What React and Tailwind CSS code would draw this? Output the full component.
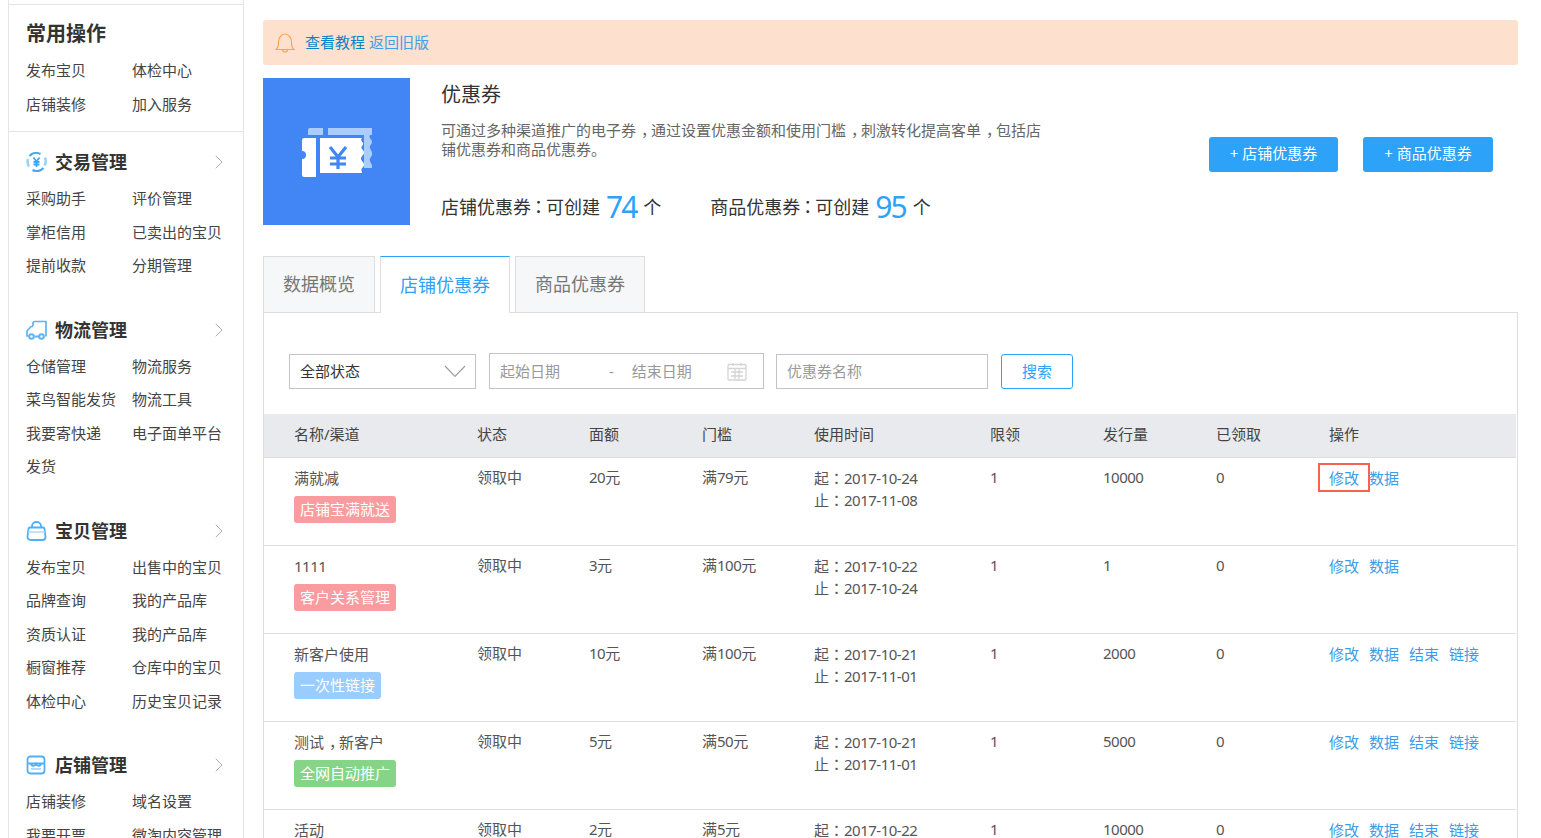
import { ChevronRight } from "lucide-react";

const SIDE = [
  {
    title: "交易管理",
    icon: "money",
    items: ["采购助手", "评价管理", "掌柜信用", "已卖出的宝贝", "提前收款", "分期管理"],
  },
  {
    title: "物流管理",
    icon: "truck",
    items: ["仓储管理", "物流服务", "菜鸟智能发货", "物流工具", "我要寄快递", "电子面单平台", "发货"],
  },
  {
    title: "宝贝管理",
    icon: "bag",
    items: ["发布宝贝", "出售中的宝贝", "品牌查询", "我的产品库", "资质认证", "我的产品库", "橱窗推荐", "仓库中的宝贝", "体检中心", "历史宝贝记录"],
  },
  {
    title: "店铺管理",
    icon: "shop",
    items: ["店铺装修", "域名设置", "我要开票", "微淘内容管理"],
  },
];

const ROWS = [
  { name: "满就减", tag: "店铺宝满就送", tagClass: "bg-[#f99b9f]", value: "20", min: "79", from: "2017-10-24", to: "2017-11-08", total: "10000", actions: ["修改", "数据"], boxed: true },
  { name: "1111", tag: "客户关系管理", tagClass: "bg-[#f99b9f]", value: "3", min: "100", from: "2017-10-22", to: "2017-10-24", total: "1", actions: ["修改", "数据"] },
  { name: "新客户使用", tag: "一次性链接", tagClass: "bg-[#99ccff]", value: "10", min: "100", from: "2017-10-21", to: "2017-11-01", total: "2000", actions: ["修改", "数据", "结束", "链接"] },
  { name: "测试，新客户", tag: "全网自动推广", tagClass: "bg-[#86d488]", value: "5", min: "50", from: "2017-10-21", to: "2017-11-01", total: "5000", actions: ["修改", "数据", "结束", "链接"] },
  { name: "活动", tag: "全网自动推广", tagClass: "bg-[#86d488]", value: "2", min: "5", from: "2017-10-22", to: "2017-11-01", total: "10000", actions: ["修改", "数据", "结束", "链接"] },
];

const GRID = "grid grid-cols-[183px_112px_113px_112px_176px_113px_113px_113px_1fr] pl-[30px]";

// the reference centres full-width punctuation in its box: the TC colon does that,
// the comma stays on the baseline so it just gets nudged right
function Txt({ children }) {
  return children.split(/([，：])/).map((part, i) => {
    if (part === "：") {
      return <span key={i} className="font-['Noto_Sans_CJK_TC',sans-serif] leading-none">{part}</span>;
    }
    if (part === "，") {
      return <span key={i} className="inline-block translate-x-[5px] leading-none">{part}</span>;
    }
    return part;
  });
}

function Num({ children }) {
  return <span className="tracking-[-0.5px]">{children}</span>;
}

function SideIcon({ type }) {
  if (type === "money") {
    return (
      <svg width="21" height="20" viewBox="0 0 21 20" fill="none" stroke="#3ea6f5">
        <path d="M3.500 4A9 9 0 0 1 14.500 2" strokeWidth="2" />
        <path d="M17.500 16A9 9 0 0 1 6.500 18" strokeWidth="2" />
        <path d="M2 7A9 9 0 0 0 3 14.500" strokeWidth="2.600" stroke="#9dd3fa" />
        <path d="M19 5.500A9 9 0 0 1 18.500 13.500" strokeWidth="2.600" stroke="#9dd3fa" />
        <path d="M7.500 5.500 10.500 9.500 13.500 5.500M10.500 9.500V15M7.500 10h6M7.500 12.500h6" strokeWidth="1.800" />
      </svg>
    );
  }
  if (type === "truck") {
    return (
      <svg width="21" height="20" viewBox="0 0 21 20" fill="none" stroke="#5cb3f5" strokeWidth="1.700">
        <path d="M7 6V3.500a2 2 0 0 1 2-2h11v13.500a1 1 0 0 1-1 1" />
        <path d="M7 6.500H5L1 11v5h1.500" />
        <path d="M8.500 16.500h4.500" strokeWidth="2" />
        <circle cx="5.500" cy="16.500" r="2.300" strokeWidth="2" />
        <circle cx="15.500" cy="16.500" r="2.300" strokeWidth="2" />
      </svg>
    );
  }
  if (type === "bag") {
    return (
      <svg width="21" height="20" viewBox="0 0 21 20" fill="none" stroke="#4fb0f7" strokeWidth="1.800">
        <path d="M2.500 7.500a2 2 0 0 1 2-1h12a2 2 0 0 1 2 1l1 8.500a3 3 0 0 1-3 3H4.500a3 3 0 0 1-3-3z" />
        <path d="M6 6.500V5a4.500 4 0 0 1 9 0v1.500" />
        <path d="M2 11h17" stroke="#a7d8fb" strokeWidth="1.400" />
      </svg>
    );
  }
  return (
    <svg width="20" height="20" viewBox="0 0 20 20" fill="none" stroke="#4fb0f7" strokeWidth="1.800">
      <rect x="1.500" y="1.500" width="17" height="17" rx="3" />
      <path d="M1 8.500h18M5 8.500c0 3 4 3 5 .5 1 2.500 5 2.500 5-.5" />
      <path d="M5 14h10" stroke="#a7d8fb" />
    </svg>
  );
}

function Sidebar() {
  return (
    <aside className="ml-2 w-[236px] shrink-0 self-start border-x border-[#e4e4e4] pt-1 text-[15px] text-[#444]">
      <div className="border-y border-[#e4e4e4] pl-[17px] pt-[16px] pb-[10px]">
        <h2 className="text-[20px] leading-[26px] font-bold text-[#333]">常用操作</h2>
        <div className="mt-[7px] grid grid-cols-[106px_1fr]">
          {["发布宝贝", "体检中心", "店铺装修", "加入服务"].map((t) => (
            <span key={t} className="h-[33.500px] leading-[33.500px]">{t}</span>
          ))}
        </div>
      </div>
      {SIDE.map((s) => (
        <section key={s.title} className="pl-[17px] pt-[18px] pb-[17px]">
          <div className="flex h-[24px] items-center">
            <span className="flex w-[29px] items-center"><SideIcon type={s.icon} /></span>
            <h3 className="text-[18px] leading-[24px] font-bold text-[#333]">{s.title}</h3>
            <ChevronRight className="ml-auto mr-[12px] text-[#999]" size={24} strokeWidth={0.8} />
          </div>
          <div className="mt-[8px] grid grid-cols-[106px_1fr]">
            {s.items.map((t, i) => (
              <span key={i} className="h-[33.500px] leading-[33.500px] whitespace-nowrap">{t}</span>
            ))}
          </div>
        </section>
      ))}
    </aside>
  );
}

function TicketIcon() {
  return (
    <svg className="mt-[2px] ml-[1px]" width="70" height="50" viewBox="0 0 70 50" fill="none">
      <path d="M6 2a2 2 0 0 1 2-2h13v7H6zM26 0h44v7H26z" fill="#a9cdfc" />
      <path d="M62 7h6c-2 3 2 4 2 7s-3 3-2 6 3 4 2 7-3 3-2 6 2 3 2 5v2h-8z" fill="#a9cdfc" />
      <path d="M2 10h12v39H2a2 2 0 0 1-2-2V31c3 0 4-2 4-4s-1-4-4-4V12a2 2 0 0 1 2-2z" fill="#fff" />
      <path d="M18 10h42c-2 2 0 3 1 5s-3 4-1 6 3 4 1 6-3 4-1 6 3 4 1 6-2 3-1 5c0 1 0 1-1 1H18z" fill="#fff" />
      <path d="M28 19l8 10 8-10M36 29v12M28 30h16M28 36h16" stroke="#4285f4" strokeWidth="3.200" />
    </svg>
  );
}

function Hero() {
  const colon = "mx-[-1.5px] font-['Noto_Sans_CJK_TC',sans-serif] leading-none";
  const count = "ml-[6px] mr-[7px] text-[30px] tracking-[-2px] text-[#2ca2f9]";
  return (
    <div className="mt-[13px] flex h-[147px]">
      <div className="flex h-[147px] w-[147px] shrink-0 items-center justify-center bg-[#4285f4]">
        <TicketIcon />
      </div>
      <div className="ml-[31px] w-[604px]">
        <h1 className="pt-px text-[20px] leading-[32px] text-[#333]">优惠券</h1>
        <p className="mt-[10px] text-[15px] leading-[19px] text-[#666]">
          <Txt>可通过多种渠道推广的电子券，通过设置优惠金额和使用门槛，刺激转化提高客单，包括店铺优惠券和商品优惠券。</Txt>
        </p>
        <div className="mt-[28px] flex items-center text-[18px] leading-[40px] whitespace-nowrap text-[#333]">
          <span>店铺优惠券<span className={colon}>：</span>可创建</span>
          <span className={count}>74</span>
          <span>个</span>
          <span className="ml-[49px]">商品优惠券<span className={colon}>：</span>可创建</span>
          <span className={count}>95</span>
          <span>个</span>
        </div>
      </div>
      <div className="mt-[59px] ml-auto mr-[25px] flex gap-[25px] self-start">
        <button className="h-[35px] w-[129px] rounded-[3px] bg-[#2ca2f9] pb-[2px] text-[15px] text-white">+ 店铺优惠券</button>
        <button className="h-[35px] w-[130px] rounded-[3px] bg-[#2ca2f9] pb-[2px] text-[15px] text-white">+ 商品优惠券</button>
      </div>
    </div>
  );
}

function Tabs() {
  const idle = "h-[56px] border border-b-0 border-[#dcdde1] bg-[#f6f7f9] text-[18px] text-[#777]";
  return (
    <div className="relative z-10 mt-[31px] flex h-[57px] items-start gap-[5px]">
      <button className={`${idle} w-[112px]`}>数据概览</button>
      <button className="h-[57px] w-[130px] border-x border-t border-x-[#dcdde1] border-t-[#2ca2f9] bg-white text-[18px] text-[#2ca2f9]">店铺优惠券</button>
      <button className={`${idle} w-[130px]`}>商品优惠券</button>
    </div>
  );
}

function Filters() {
  return (
    <div className="flex items-start pl-[25px] pt-[40px] text-[15px]">
      <div className="mt-[1px] flex h-[35px] w-[187px] items-center border border-[#c3c3cd] pl-[10px] pr-[9px] text-[#333]">
        全部状态
        <svg className="ml-auto" width="22" height="13" viewBox="0 0 22 13" fill="none" stroke="#9a9aa5" strokeWidth="1.100">
          <path d="M1 1l10 10.500L21 1" />
        </svg>
      </div>
      <div className="ml-[13px] flex h-[36px] w-[275px] items-center border border-[#c3c3cd] pl-[10px] pr-[16px] text-[#999]">
        <span>起始日期</span>
        <span className="ml-[49px]">-</span>
        <span className="ml-[18px]">结束日期</span>
        <svg className="ml-auto" width="20" height="19" viewBox="0 0 20 19" fill="none" stroke="#d4d4d4" strokeWidth="1.300">
          <rect x="1" y="2.500" width="18" height="15.500" rx="1" />
          <path d="M1 6.500h18M6 1v3M14 1v3M4 10h12M4 14h12M8 7v10M12 7v10" />
        </svg>
      </div>
      <div className="mt-[1px] ml-[12px] flex h-[35px] w-[212px] items-center border border-[#c3c3cd] pl-[10px] text-[#999]">优惠券名称</div>
      <button className="mt-[1px] ml-[13px] h-[35px] w-[72px] rounded-[3px] border border-[#2ca2f9] text-[#2ca2f9]">搜索</button>
    </div>
  );
}

function CouponTable() {
  return (
    <div className="mt-[25px] mr-[1px] text-[15px] text-[#555]">
      <div className={`${GRID} h-[44px] items-center border-b border-[#dedede] bg-[#e9eaed] pb-[2px] text-[#444]`}>
        {["名称/渠道", "状态", "面额", "门槛", "使用时间", "限领", "发行量", "已领取", "操作"].map((h) => (
          <span key={h}>{h}</span>
        ))}
      </div>
      {ROWS.map((r) => (
        <div key={r.name} className={`${GRID} h-[88px] border-b border-[#dedede] pt-[9px] leading-[22px]`}>
          <div>
            <div>{/^\d+$/.test(r.name) ? <Num>{r.name}</Num> : <Txt>{r.name}</Txt>}</div>
            <span className={`mt-[7px] inline-block h-[27px] rounded-[3px] px-[6px] leading-[26px] text-white ${r.tagClass}`}>{r.tag}</span>
          </div>
          <span className="-mt-px">领取中</span>
          <span className="-mt-px"><Num>{r.value}</Num>元</span>
          <span className="-mt-px">满<Num>{r.min}</Num>元</span>
          <div>
            <div><Txt>起：</Txt><Num>{r.from}</Num></div>
            <div><Txt>止：</Txt><Num>{r.to}</Num></div>
          </div>
          <span className="-mt-px"><Num>1</Num></span>
          <span className="-mt-px"><Num>{r.total}</Num></span>
          <span className="-mt-px"><Num>0</Num></span>
          <div className="flex gap-[10px] text-[#3b9ce8]">
            {r.actions.map((a, i) => (
              <span key={a} className="relative">
                {a}
                {r.boxed && i === 0 && (
                  <span className="absolute top-[-4px] left-[-11px] h-[29px] w-[52px] border-2 border-[#f66151]" />
                )}
              </span>
            ))}
          </div>
        </div>
      ))}
    </div>
  );
}

export default function App() {
  return (
    <div className="flex h-[838px] overflow-hidden bg-white font-['Noto_Sans','Noto_Sans_CJK_SC',sans-serif]">
      <Sidebar />
      <main className="ml-[19px] w-[1255px] shrink-0 pt-[20px]">
        <div className="flex h-[45px] items-center rounded-[3px] bg-[#fee0ce] pl-[12px] text-[15px]">
          <svg width="20" height="22" viewBox="0 0 20 22" fill="none" stroke="#fba44d" strokeWidth="1.200">
            <path d="M1 17.500c2-1.500 2.500-3.500 2.500-7 0-4.500 2.500-8.500 6.500-8.500s6.500 4 6.500 8.500c0 3.500.5 5.500 2.500 7z" />
            <path d="M7.500 17.500a2.500 2.500 0 0 0 5 0" />
          </svg>
          <span className="ml-[10px] text-[#0a84c8]">查看教程</span>
          <span className="ml-[4px] text-[#3da0e8]">返回旧版</span>
        </div>
        <Hero />
        <Tabs />
        <div className="-mt-px border border-[#dcdde1]">
          <Filters />
          <CouponTable />
        </div>
      </main>
    </div>
  );
}
